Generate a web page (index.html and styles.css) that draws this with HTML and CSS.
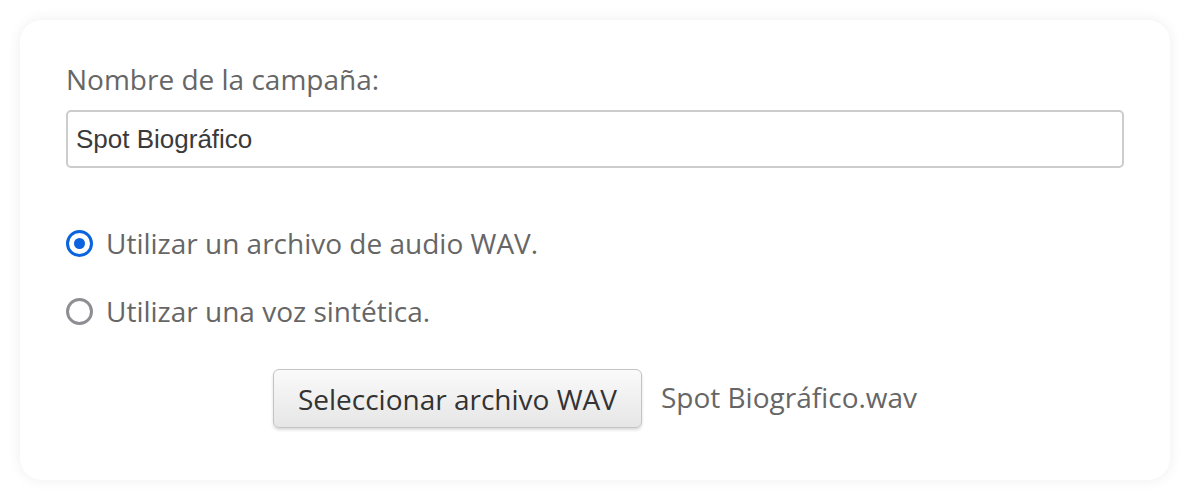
FILE: index.html
```html
<!DOCTYPE html>
<html lang="es">
<head>
    <meta charset="UTF-8">
    <meta name="viewport" content="width=device-width, initial-scale=1.0">
    <title>Campaña</title>
    <link rel="stylesheet" href="styles.css">
</head>
<body>
    <div class="card">
        <label class="field-label" for="campaignName">Nombre de la campaña:</label>
        <input class="text-input" type="text" id="campaignName" value="Spot Biográfico">

        <div class="options">
            <label class="option">
                <span class="radio checked"></span>
                <span>Utilizar un archivo de audio WAV.</span>
            </label>
            <label class="option">
                <span class="radio"></span>
                <span>Utilizar una voz sintética.</span>
            </label>
        </div>

        <div class="file-row">
            <button class="file-button" type="button">Seleccionar archivo WAV</button>
            <span class="file-name">Spot Biográfico.wav</span>
        </div>
    </div>
</body>
</html>
```

FILE: styles.css
```css
body {
    margin: 0;
    padding: 20px;
    background-color: #fff;
    font-family: "Open Sans", sans-serif;
    color: #666;
}

.card {
    box-sizing: border-box;
    width: 1150px;
    height: 460px;
    padding: 39px 46px 0;
    background-color: #fff;
    border-radius: 22px;
    box-shadow: 0 0 14px rgba(0, 0, 0, 0.07);
}

.field-label {
    display: block;
    font-size: 28px;
    line-height: 40px;
    margin-bottom: 11px;
}

.text-input {
    display: block;
    box-sizing: border-box;
    width: 100%;
    height: 58px;
    padding: 0 8px;
    border: 2px solid #ccc;
    border-radius: 5px;
    font-family: "Liberation Sans", Arial, sans-serif;
    font-size: 26px;
    color: #3a3a3a;
    outline: none;
}

.options {
    display: flex;
    flex-direction: column;
    gap: 28px;
    margin-top: 55px;
}

.option {
    display: flex;
    align-items: center;
    gap: 13px;
    font-size: 28px;
    line-height: 40px;
}

.radio {
    box-sizing: border-box;
    width: 27px;
    height: 27px;
    border: 3px solid #8e8e93;
    border-radius: 50%;
    display: flex;
    align-items: center;
    justify-content: center;
}

.radio.checked {
    border-color: #0a64de;
}

.radio.checked::after {
    content: "";
    width: 11px;
    height: 11px;
    border-radius: 50%;
    background-color: #0a64de;
}

.file-row {
    display: flex;
    justify-content: center;
    align-items: center;
    gap: 19px;
    margin-top: 38px;
}

.file-button {
    height: 59px;
    padding: 0 24px;
    border: 1px solid #c4c4c4;
    border-radius: 6px;
    background: linear-gradient(#fafafa, #e6e6e6);
    box-shadow: 0 2px 3px rgba(0, 0, 0, 0.15);
    font-family: "Open Sans", sans-serif;
    font-size: 28px;
    color: #333;
    cursor: pointer;
}

.file-name {
    font-size: 28px;
    margin-bottom: 4px;
}
```
